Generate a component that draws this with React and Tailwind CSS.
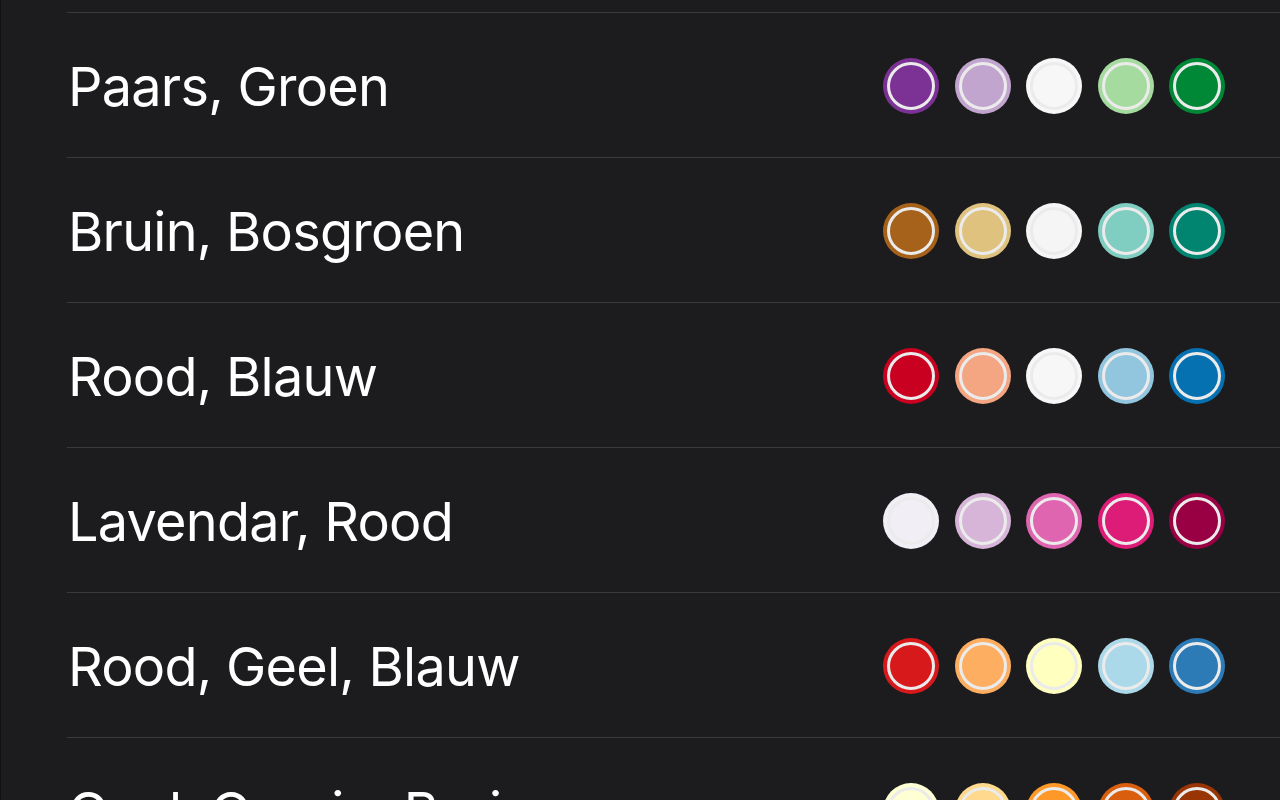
const palettes = [
  { name: 'Paars, Groen', colors: ['bg-[#7b3294]', 'bg-[#c2a5cf]', 'bg-[#f7f7f7]', 'bg-[#a6dba0]', 'bg-[#008837]'] },
  { name: 'Bruin, Bosgroen', colors: ['bg-[#a6611a]', 'bg-[#dfc27d]', 'bg-[#f5f5f5]', 'bg-[#80cdc1]', 'bg-[#018571]'] },
  { name: 'Rood, Blauw', colors: ['bg-[#ca0020]', 'bg-[#f4a582]', 'bg-[#f7f7f7]', 'bg-[#92c5de]', 'bg-[#0571b0]'] },
  { name: 'Lavendar, Rood', colors: ['bg-[#f1eef6]', 'bg-[#d7b5d8]', 'bg-[#df65b0]', 'bg-[#dd1c77]', 'bg-[#980043]'] },
  { name: 'Rood, Geel, Blauw', colors: ['bg-[#d7191c]', 'bg-[#fdae61]', 'bg-[#ffffbf]', 'bg-[#abd9e9]', 'bg-[#2c7bb6]'] },
  { name: 'Geel, Oranje, Bruin', colors: ['bg-[#ffffd4]', 'bg-[#fed98e]', 'bg-[#fe9929]', 'bg-[#d95f0e]', 'bg-[#993404]'] },
]

function Swatch({ color }) {
  return (
    <div className={`w-14 h-14 rounded-full p-[4px] ${color}`}>
      <div className={`w-full h-full rounded-full border-[3px] border-[#ebebeb] ${color}`} />
    </div>
  )
}

export default function App() {
  return (
    <div className="w-[1280px] h-[800px] overflow-hidden bg-[#1c1c1e] border-l border-[#111112] font-['Inter',sans-serif] text-white">
      <div className="h-[12px]" />
      <div className="pl-[66px]">
        {palettes.map((p) => (
          <div key={p.name} className="border-t border-[#3a3a3c]">
            <div className="h-[144px] flex items-center justify-between pr-[55px]">
              <span className="text-[54px] leading-none tracking-[-0.014em] pl-[1px] mt-[3px]">{p.name}</span>
              <div className="flex gap-[15.5px] mt-[2px]">
                {p.colors.map((c, i) => (
                  <Swatch key={i} color={c} />
                ))}
              </div>
            </div>
          </div>
        ))}
      </div>
    </div>
  )
}
